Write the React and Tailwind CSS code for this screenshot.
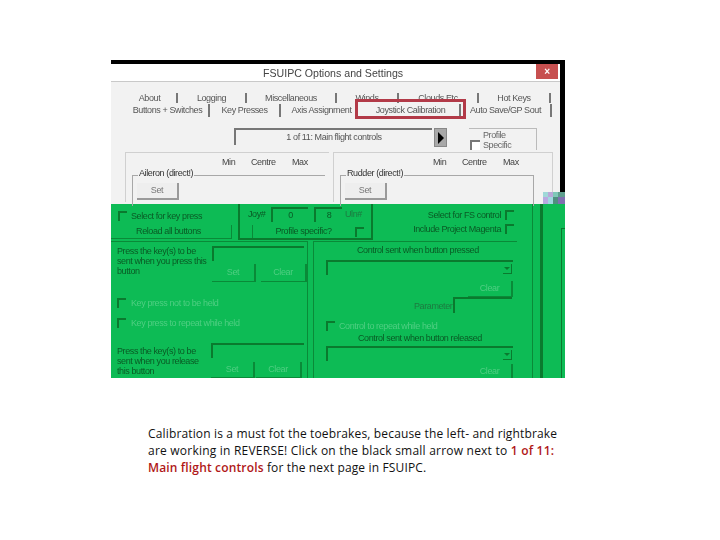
function Tab({ w, children, sep = true }) {
  return (
    <div className={`flex h-full items-center justify-center ${w} ${sep ? "border-r-2 border-[#777777]" : ""}`}>
      {children}
    </div>
  );
}

function Btn({ w, h, children, className = "" }) {
  return (
    <div className={`flex shrink-0 items-center justify-center border-r-2 border-b border-[#0a8a38] text-[#4fce82] ${w} ${h} ${className}`}>
      {children}
    </div>
  );
}

function Input({ w, h, className = "", children }) {
  return (
    <div className={`shrink-0 border-t-2 border-l-2 border-[#0a7a2e] ${w} ${h} ${className}`}>{children}</div>
  );
}

function Check({ className = "" }) {
  return <div className={`h-[10px] w-[9px] shrink-0 border-t-2 border-l-2 border-[#0a7a2e] ${className}`} />;
}

function Combo() {
  return (
    <div className="ml-[12px] flex h-[15px] w-[187px] items-end justify-end border-t-2 border-l-2 border-[#0a7a2e]">
      <div className="mb-[1px] mr-[1px] flex h-[10px] w-[9px] items-center justify-center border-r border-b border-[#0a7a2e]">
        <div className="h-0 w-0 border-x-[3px] border-t-[3px] border-x-transparent border-t-[#0a7a2e]" />
      </div>
    </div>
  );
}

function Panel({ ml, w, title, minMl, field }) {
  return (
    <div className={`${ml} ${w} h-[50px] shrink-0 border-t border-l border-[#d0d0d0] ${field.outer}`}>
      <div className={`flex h-[19px] items-center text-[#444] ${minMl}`}>
        <span className="w-[28px]">Min</span>
        <span className="ml-[1px] w-[41px]">Centre</span>
        <span>Max</span>
      </div>
      <div className={`ml-[6px] mt-[3px] h-[31px] border-t border-l border-[#a8a8a8] ${field.inner}`}>
        <div className="-mt-[7px] ml-[5px] w-fit bg-[#f2f2f2] px-[1px] text-[#333]">{title}</div>
        <div className="ml-[4px] mt-[5px] flex h-[17px] w-[42px] items-center justify-center border-r-2 border-b-2 border-[#9a9a9a] bg-[#eeeeee] text-[#777]">
          Set
        </div>
      </div>
    </div>
  );
}

export default function App() {
  return (
    <div className="relative h-[540px] w-[720px] overflow-hidden bg-white font-['Liberation_Sans',sans-serif]">
      <div className="ml-[111px] w-[454px] pt-[60px] text-[9px] leading-none tracking-[-0.4px] blur-[0.35px]">
        {/* Window part */}
        <div className="h-[4px] bg-black" />
        <div className="relative flex h-[140px]">
          <div className="w-[449px] bg-[#f2f2f2]">
            <div className="flex h-[18px] border-b border-[#c9c9c9] bg-white">
              <div className="flex-1 pl-[152px] pt-[4px] text-[10.6px] tracking-normal text-[#444]">FSUIPC Options and Settings</div>
              <div className="mr-[2px] flex h-[15px] w-[22px] items-center justify-center bg-[#c75050] text-[10px] font-bold text-white">×</div>
            </div>
            <div className="relative text-[#555]">
              <div className="ml-[12px] mt-[11px] flex h-[10px]">
                <Tab w="w-[55px]">About</Tab>
                <Tab w="w-[69px]">Logging</Tab>
                <Tab w="w-[90px]">Miscellaneous</Tab>
                <Tab w="w-[62px]">Winds</Tab>
                <Tab w="w-[80px]">Clouds Etc</Tab>
                <Tab w="w-[72px]">Hot Keys</Tab>
              </div>
              <div className="ml-[16px] mt-[1px] flex h-[13px]">
                <Tab w="w-[83px]">Buttons + Switches</Tab>
                <Tab w="w-[71px]">Key Presses</Tab>
                <Tab w="w-[81px]" sep={false}>Axis Assignment</Tab>
                <Tab w="w-[99px]">Joystick Calibration</Tab>
                <Tab w="w-[91px]">Auto Save/GP Sout</Tab>
              </div>
              <div className="pointer-events-none absolute left-[244px] top-[6px] h-[20px] w-[111px] border-[3px] border-[#b23a48]" />
            </div>
            <div className="ml-[123px] mt-[11px] flex h-[22px] items-start">
              <div className="flex h-[17px] w-[198px] items-center justify-center border-t-2 border-l-2 border-[#777] text-[#555]">
                1 of 11: Main flight controls
              </div>
              <div className="ml-[2px] flex h-[19px] w-[13px] items-center justify-center border border-[#888] bg-[#a8a8a8]">
                <div className="h-0 w-0 border-y-[6px] border-l-[6px] border-y-transparent border-l-black" />
              </div>
              <div className="ml-[22px] flex h-[22px] w-[68px] items-end border-t border-r border-[#bbb] pl-[1px]">
                <div className="h-[10px] w-[10px] border-t-2 border-l-2 border-[#777] bg-white" />
                <div className="ml-[3px] text-[#666]">
                  <div>Profile</div>
                  <div className="mt-[1px]">Specific</div>
                </div>
              </div>
            </div>
            <div className="mt-[2px] flex">
              <Panel ml="ml-[14px]" w="w-[204px]" title="Aileron (direct!)" minMl="ml-[96px]" field={{ outer: "", inner: "mr-[4px]" }} />
              <Panel ml="ml-[4px]" w="w-[220px]" title="Rudder (direct!)" minMl="ml-[99px]" field={{ outer: "border-r", inner: "mr-[18px] border-r" }} />
            </div>
          </div>
          <div className="w-[5px]">
            <div className="h-[128px] bg-black" />
          </div>
          <svg className="absolute bottom-0 right-0" width="22" height="12" viewBox="0 0 22 12">
            <rect x="0" y="0" width="5" height="5" fill="#9fd8d8" />
            <rect x="5" y="0" width="5" height="5" fill="#b8a8d8" />
            <rect x="10" y="0" width="5" height="5" fill="#7fc8b8" />
            <rect x="15" y="0" width="7" height="5" fill="#5f9f8f" />
            <rect x="0" y="5" width="5" height="7" fill="#b8a8e0" />
            <rect x="5" y="5" width="5" height="7" fill="#9fd8e0" />
            <rect x="10" y="5" width="5" height="7" fill="#4f8f7f" />
            <rect x="15" y="5" width="7" height="7" fill="#7f6fb0" />
          </svg>
        </div>

        {/* Green part */}
        <div className="flex h-[174px] bg-[#0dbb55] text-[#0a5a25]">
          <div className="w-[421px] overflow-hidden">
            <div className="flex h-[37px]">
              <div className="w-[127px] shrink-0">
                <div className="ml-[7px] mt-[7px] flex h-[10px] items-center">
                  <Check />
                  <span className="ml-[4px]">Select for key press</span>
                </div>
                <div className="mt-[4px] flex h-[14px] w-[121px] items-center justify-center border-r border-b border-[#0a8a38] pr-[5px]">
                  Reload all buttons
                </div>
              </div>
              <div className="h-[36px] w-[135px] shrink-0 border-b-2 border-l-2 border-r-2 border-[#0a7a2e]">
                <div className="ml-[8px] mt-[3px] flex h-[15px] items-center">
                  <span className="w-[23px]">Joy#</span>
                  <Input w="w-[37px]" h="h-[15px]" className="flex items-center justify-center">0</Input>
                  <Input w="w-[28px]" h="h-[15px]" className="ml-[6px] flex items-center justify-center">8</Input>
                  <span className="ml-[3px] text-[#1d7a40]">Uln#</span>
                </div>
                <div className="ml-[12px] mt-[3px] flex h-[13px] items-center">
                  <div className="flex h-[13px] w-[102px] items-center justify-center border-l border-[#0a8a38]">Profile specific?</div>
                  <Check className="ml-[1px]" />
                </div>
              </div>
              <div className="flex-1 pr-[18px] pt-[6px] text-right">
                <div className="flex h-[10px] items-center justify-end">
                  <span className="mr-[4px]">Select for FS control</span>
                  <Check />
                </div>
                <div className="mt-[4px] flex h-[10px] items-center justify-end">
                  <span className="mr-[4px]">Include Project Magenta</span>
                  <Check />
                </div>
              </div>
            </div>

            <div className="flex h-[137px]">
              <div className="w-[197px] shrink-0 border-t border-r border-[#0a8a38]">
                <div className="ml-[6px] mt-[4px] flex">
                  <div className="w-[92px] leading-[10px]">Press the key(s) to be sent when you press this button</div>
                  <div className="ml-[3px]">
                    <Input w="w-[92px]" h="h-[15px]" />
                    <div className="mt-[3px] flex">
                      <Btn w="w-[44px]" h="h-[18px]">Set</Btn>
                      <Btn w="w-[46px]" h="h-[18px]" className="ml-[5px] border-[#0a7a2e]">Clear</Btn>
                    </div>
                  </div>
                </div>
                <div className="ml-[6px] mt-[16px] flex h-[10px] items-center text-[#4fce82]">
                  <Check />
                  <span className="ml-[5px]">Key press not to be held</span>
                </div>
                <div className="ml-[6px] mt-[10px] flex h-[10px] items-center text-[#4fce82]">
                  <Check />
                  <span className="ml-[5px]">Key press to repeat while held</span>
                </div>
                <div className="ml-[6px] mt-[15px] flex">
                  <div className="w-[91px] pt-[3px] leading-[10px]">Press the key(s) to be sent when you release this button</div>
                  <div className="ml-[3px]">
                    <Input w="w-[93px]" h="h-[15px]" />
                    <div className="mt-[4px] flex">
                      <Btn w="w-[44px]" h="h-[16px]">Set</Btn>
                      <Btn w="w-[46px]" h="h-[16px]" className="ml-[1px]">Clear</Btn>
                    </div>
                  </div>
                </div>
              </div>
              <div className="ml-[5px] w-[204px] shrink-0 border-t border-l border-[#0a8a38]">
                <div className="mt-[4px] h-[10px] pl-[43px] text-[#0a5a25]">Control sent when button pressed</div>
                <div className="mt-[4px]"><Combo /></div>
                <Btn w="w-[45px]" h="h-[16px]" className="ml-[154px] mt-[6px]">Clear</Btn>
                <div className="flex h-[16px] items-center">
                  <span className="ml-[100px] w-[39px] pt-[3px] text-[#1d7a40]">Parameter</span>
                  <Input w="w-[59px]" h="h-[16px]" />
                </div>
                <div className="ml-[12px] mt-[8px] flex h-[10px] items-center text-[#4fce82]">
                  <Check />
                  <span className="ml-[4px]">Control to repeat while held</span>
                </div>
                <div className="mt-[3px] h-[10px] pl-[44px]">Control sent when button released</div>
                <div className="mt-[2px]"><Combo /></div>
                <Btn w="w-[45px]" h="h-[16px]" className="ml-[154px] mt-[3px]">Clear</Btn>
              </div>
            </div>
          </div>
          <div className="flex w-[33px] border-l border-[#0a8a38]">
            <div className="ml-[7px] h-full w-[3px] bg-[#0a7a2e]" />
            <div className="ml-[18px] mt-[24px] w-[4px] border-t border-l border-[#0a7a2e]" />
          </div>
        </div>
      </div>

      {/* Caption */}
      <div className="ml-[148px] mt-[47px] w-[420px] font-['Open_Sans',sans-serif] text-[12px] font-medium leading-[17px] tracking-[0.15px] text-[#111]">
        <div className="whitespace-nowrap">Calibration is a must fot the toebrakes, because the left- and rightbrake</div>
        <div className="whitespace-nowrap tracking-[0.22px]">
          are working in REVERSE! Click on the black small arrow next to <span className="font-semibold text-[#b01818]">1 of 11:</span>
        </div>
        <div className="whitespace-nowrap">
          <span className="font-semibold text-[#b01818]">Main flight controls</span> for the next page in FSUIPC.
        </div>
      </div>
    </div>
  );
}
